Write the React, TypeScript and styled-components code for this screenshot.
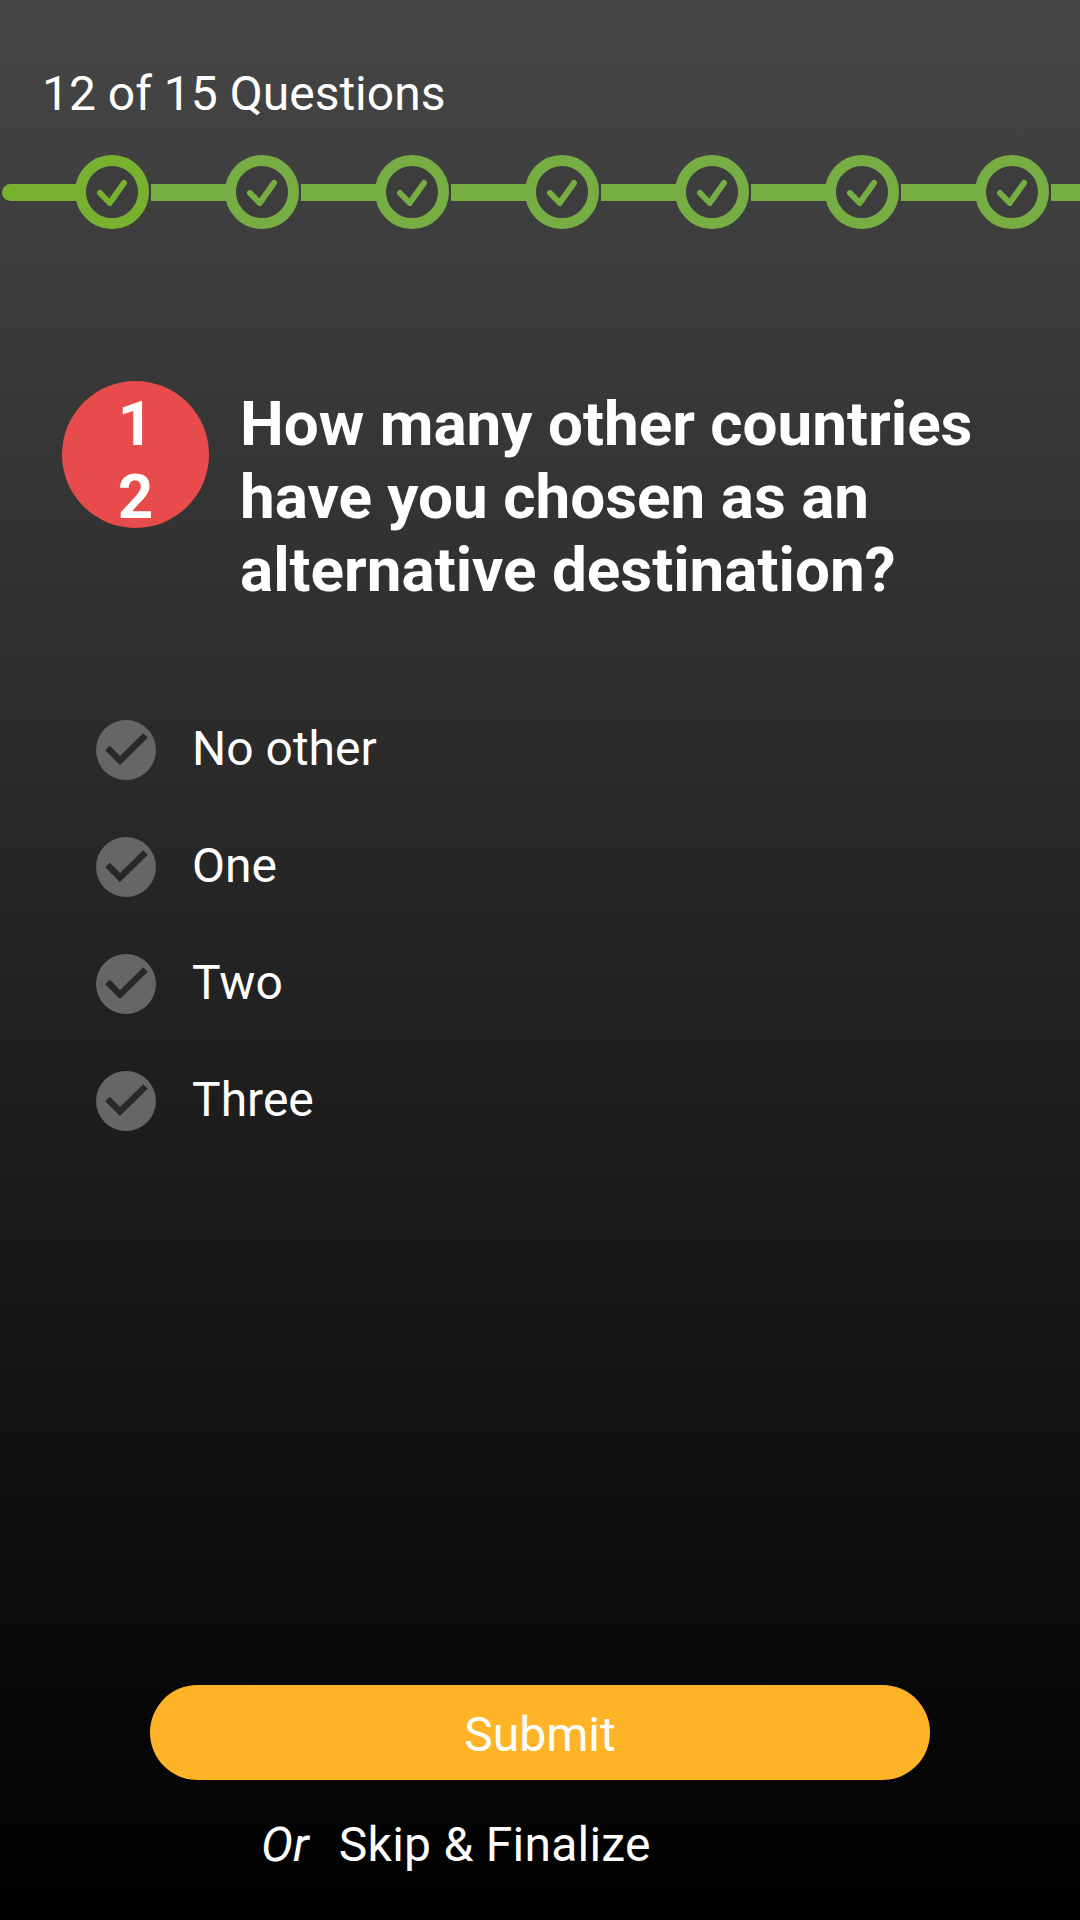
import { createGlobalStyle, styled } from "styled-components";

const options = ["No other", "One", "Two", "Three"];
const steps = [0, 1, 2, 3, 4, 5, 6];

const GlobalStyle = createGlobalStyle`
  html, body {
    margin: 0;
    padding: 0;
    background: #000;
  }
  * {
    box-sizing: border-box;
  }
`;

const Screen = styled.div`
  width: 1080px;
  height: 1920px;
  overflow: hidden;
  display: flex;
  flex-direction: column;
  background: linear-gradient(180deg, #464646 0%, #000 100%);
  color: #fff;
  font-family: Roboto, "Liberation Sans", sans-serif;
`;

const Counter = styled.div`
  padding: 65px 0 0 42px;
  font-size: 48px;
  line-height: 58px;
`;

const Stepper = styled.div`
  display: flex;
  align-items: center;
  margin-top: 32px;
  padding-left: 2px;
  height: 74px;
`;

const Step = styled.div`
  flex: none;
  display: flex;
  align-items: center;
  margin-right: 2px;
`;

const Bar = styled.div<{ $first: boolean }>`
  flex: none;
  width: ${(p) => (p.$first ? 77 : 78)}px;
  height: 17px;
  margin-right: -4px;
  background: ${(p) => (p.$first ? "#78b12f" : "#76ae44")};
  border-radius: ${(p) => (p.$first ? "9px 0 0 9px" : "0")};
`;

const TailBar = styled.div`
  flex: none;
  width: 40px;
  height: 17px;
  background: #76ae44;
`;

const StepRing = styled.div<{ $first: boolean }>`
  position: relative;
  flex: none;
  width: 74px;
  height: 74px;
  border-radius: 50%;
  border: 11px solid ${(p) => (p.$first ? "#78b12f" : "#76ae44")};
  color: ${(p) => (p.$first ? "#78b12f" : "#76ae44")};
  background: #3d3d3d;
  display: flex;
  align-items: center;
  justify-content: center;
`;

const Question = styled.div`
  display: flex;
  align-items: flex-start;
  margin-top: 152px;
  padding-left: 62px;
  padding-right: 40px;
  gap: 31px;
`;

const Badge = styled.div`
  flex: none;
  width: 147px;
  height: 147px;
  border-radius: 50%;
  background: #e84b4b;
  padding: 6px 40px 0;
  text-align: center;
  font-size: 62px;
  font-weight: 700;
  line-height: 73px;
  word-break: break-all;
`;

const Title = styled.h1`
  margin: 0;
  padding-top: 6px;
  font-size: 62px;
  font-weight: 700;
  line-height: 73px;
`;

const OptionList = styled.div`
  display: flex;
  flex-direction: column;
  gap: 57px;
  margin-top: 114px;
  padding-left: 96px;
`;

const Option = styled.div`
  display: flex;
  align-items: center;
  gap: 36px;
  height: 60px;
  font-size: 48px;
`;

const OptionLabel = styled.span`
  padding-bottom: 4px;
`;

const OptionMark = styled.div`
  flex: none;
  width: 60px;
  height: 60px;
  border-radius: 50%;
  background: #666;
`;

const Actions = styled.div`
  margin-top: auto;
  padding-bottom: 46px;
  display: flex;
  flex-direction: column;
  align-items: center;
`;

const SubmitButton = styled.button`
  width: 780px;
  height: 95px;
  padding: 3px 0 0;
  border: 0;
  border-radius: 48px;
  background: #ffb428;
  color: #fff;
  font-family: inherit;
  font-size: 48px;
`;

const SkipRow = styled.div`
  align-self: flex-start;
  display: flex;
  gap: 30px;
  margin-top: 36px;
  padding-left: 261px;
  font-size: 48px;
  line-height: 58px;
`;

const Or = styled.span`
  font-style: italic;
`;

const SkipLink = styled.span`
  letter-spacing: 0.25px;
`;

function StepCheck() {
  return (
    <svg width="52" height="52" viewBox="0 0 52 52">
      <path
        d="M14 27 L23.7 37 L38 17"
        fill="none"
        stroke="currentColor"
        strokeWidth="6"
        strokeLinecap="round"
        strokeLinejoin="round"
      />
    </svg>
  );
}

function OptionCheck() {
  return (
    <svg width="60" height="60" viewBox="0 0 60 60">
      <path
        d="M11.5 28 L24 40.5 L49.5 15.5"
        fill="none"
        stroke="#282828"
        strokeWidth="6.5"
      />
    </svg>
  );
}

export default function App() {
  return (
    <Screen>
      <GlobalStyle />
      <Counter>12 of 15 Questions</Counter>
      <Stepper>
        {steps.map((step) => (
          <Step key={step}>
            <Bar $first={step === 0} />
            <StepRing $first={step === 0}>
              <StepCheck />
            </StepRing>
          </Step>
        ))}
        <TailBar />
      </Stepper>
      <Question>
        <Badge>12</Badge>
        <Title>
          How many other countries
          <br />
          have you chosen as an
          <br />
          alternative destination?
        </Title>
      </Question>
      <OptionList>
        {options.map((option) => (
          <Option key={option}>
            <OptionMark>
              <OptionCheck />
            </OptionMark>
            <OptionLabel>{option}</OptionLabel>
          </Option>
        ))}
      </OptionList>
      <Actions>
        <SubmitButton>Submit</SubmitButton>
        <SkipRow>
          <Or>Or</Or>
          <SkipLink>Skip &amp; Finalize</SkipLink>
        </SkipRow>
      </Actions>
    </Screen>
  );
}
